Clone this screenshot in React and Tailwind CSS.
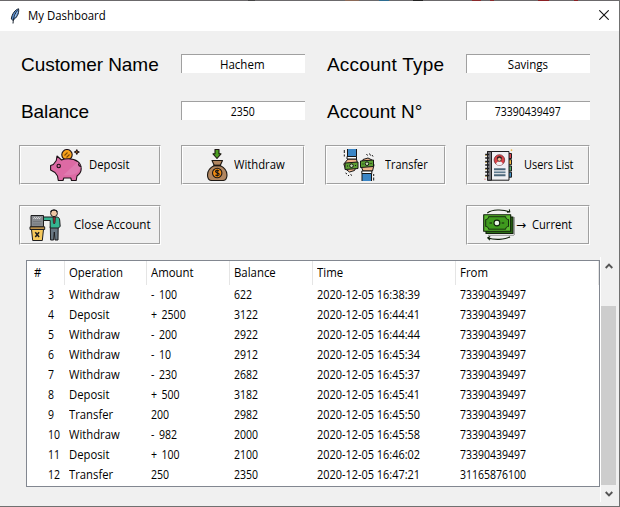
import React from "react";

const rows = [
  ["3", "Withdraw", "- 100", "622", "2020-12-05 16:38:39", "73390439497"],
  ["4", "Deposit", "+ 2500", "3122", "2020-12-05 16:44:41", "73390439497"],
  ["5", "Withdraw", "- 200", "2922", "2020-12-05 16:44:44", "73390439497"],
  ["6", "Withdraw", "- 10", "2912", "2020-12-05 16:45:34", "73390439497"],
  ["7", "Withdraw", "- 230", "2682", "2020-12-05 16:45:37", "73390439497"],
  ["8", "Deposit", "+ 500", "3182", "2020-12-05 16:45:41", "73390439497"],
  ["9", "Transfer", "200", "2982", "2020-12-05 16:45:50", "73390439497"],
  ["10", "Withdraw", "- 982", "2000", "2020-12-05 16:45:58", "73390439497"],
  ["11", "Deposit", "+ 100", "2100", "2020-12-05 16:46:02", "73390439497"],
  ["12", "Transfer", "250", "2350", "2020-12-05 16:47:21", "31165876100"],
];

const columns = "grid grid-cols-[38px_82px_83px_83px_143px_143px]";

function PiggyIcon() {
  return (
    <svg viewBox="0 0 32 32" className="size-8 shrink-0" stroke="#1c1016" strokeWidth="1.1" strokeLinejoin="round">
      <circle cx="17" cy="5.7" r="5.2" fill="#f7a11b" />
      <path d="M14.500 6.500l3-3M16.500 8.500l3-3" fill="none" stroke="#7b4a08" />
      <path d="M7 7l4.500 4c2-1 4-1.300 7-1.300 7.500 0 12.700 4 12.700 10 0 3-1.700 5.500-4.200 7.300l-.8 4.500h-4.700l-.7-2.500h-7l-.8 2.500H8.300l-.8-4.500-2.500-3.500L.6 21v-4.500l2.700-1 3-4z" fill="#dd6aa4" />
      <path d="M30.500 18c-1 7-9 9-17 8l14-13c2 1.500 3 3 3 5z" fill="#e07ab0" stroke="none" />
      <circle cx="8.700" cy="17" r="1.700" fill="#dd6aa4" />
      <path d="M28.500 14.500c0 2 1 3 2.700 3" fill="none" />
      <path d="M26.800 .8l.7 1.500 1.600.7-1.600.7-.7 1.500-.7-1.500-1.600-.7 1.600-.7z" fill="#f7a11b" />
    </svg>
  );
}

function MoneyBagIcon() {
  return (
    <svg viewBox="0 0 32 32" className="size-8 shrink-0" stroke="#1d1813" strokeWidth="1.100" strokeLinejoin="round">
      <path d="M14 .5h4v4.300h2L16 9.500l-4-4.700h2z" fill="#4a9e1f" />
      <path d="M11 11.500h10.500l-2.300 5c4 2 6.800 6 6.800 9.500 0 3.500-2 5.500-4.500 5.500H11c-2.600 0-4.500-2-4.500-5.500 0-3.500 2.800-7.500 6.800-9.500z" fill="#b18660" />
      <path d="M12.500 16.500h7.500" strokeWidth="1.700" />
      <circle cx="16.200" cy="24" r="4.700" fill="#f08a12" />
      <path d="M18 22c-1-1-3.500-.8-3.500.6 0 1.800 3.700.8 3.700 2.700 0 1.500-2.700 1.600-3.800.5M16.200 20.500v7" fill="none" />
    </svg>
  );
}

function Bill({ x, y }) {
  return (
    <g transform={`translate(${x} ${y})`}>
      <path d="M.5 1.500L13.500.5v6.500L.5 8z" fill="#5d9f33" />
      <circle cx="7" cy="4.200" r="1.800" fill="#c8dcba" />
      <path d="M2.500 4.500h1M10.500 4h1" />
    </g>
  );
}

function TransferIcon() {
  return (
    <svg viewBox="0 0 32 32" className="size-8 shrink-0" stroke="#161616" strokeWidth="1" strokeLinejoin="round">
      <path d="M4.500 -1h9v8.500h-9z" fill="#3b86c6" />
      <path d="M5 10h8.500l1 5-3 6.500-5 1.500-4-3-1.700-5z" fill="#f0b48c" />
      <path d="M4 7.500h9.500V10H4z" fill="#fff" />
      <Bill x={1.5} y={12.5} />
      <path d="M1.300 1v3M1.300 5.500v2" />
      <path d="M2.500 24l1.500 1M5 26l1 1M7.500 25.500l1.500 1" />
      <path d="M20 10.500l5-1.500 4 2 2 5-1.500 6H20l-2-5z" fill="#f0b48c" />
      <Bill x={17} y={10.5} />
      <path d="M18.800 22h10v2.500h-10z" fill="#fff" />
      <path d="M19 24.500h9.500V33H19z" fill="#3b86c6" />
      <path d="M30.700 25v2M30.700 28.500v3" />
      <path d="M23.500 5l1 1.500M26.500 4.500l1 2M29 6l1 1.500" />
    </svg>
  );
}

function UsersIcon() {
  return (
    <svg viewBox="0 0 32 32" className="size-8 shrink-0" stroke="#1d1d1f" strokeWidth="1" strokeLinejoin="round">
      <path d="M24 4.500h3.500v5H24z" fill="#d8434b" />
      <path d="M24 10.700h3.500v5H24z" fill="#f0b63e" />
      <path d="M24 17h3.500v5H24z" fill="#4fa863" />
      <path d="M24 23.200h3.500v5H24z" fill="#3f8fc4" />
      <path d="M3.500 2.500h21.500v28.700H3.500z" fill="#efeff3" />
      <path d="M3.500 2.500h4v28.700h-4z" fill="#77777d" />
      <path d="M1.200 5.500h4M1.200 9h4M1.200 12.500h4M1.200 16h4M1.200 19.500h4M1.200 23h4M1.200 26.500h4" strokeWidth="1.500" />
      <path d="M1 6.500h2M1 13.500h2M1 20.500h2M1 27.500h2" stroke="#b99a54" strokeWidth=".8" />
      <circle cx="15.400" cy="11" r="5.300" fill="#dd4248" stroke="#5c2024" strokeWidth=".7" />
      <path d="M12 15c.5-2 2-2.500 3.400-2.500s3 .5 3.400 2.500c-2 1.700-5 1.700-6.800 0z" fill="#efeff3" stroke="none" />
      <circle cx="15.400" cy="10.300" r="2" fill="#f2bd98" strokeWidth=".7" />
      <path d="M13.300 9.500c.3-2.300 3.900-2.300 4.200 0" fill="none" strokeWidth="1.200" />
      <path d="M10 20.300h11.500M10 26.300h11.500" stroke="#4b6579" strokeWidth="1.900" />
      <path d="M10 23.300h11.500" stroke="#5f7b90" strokeWidth="1.700" />
      <path d="M27.500 .3v1.800M26.600 1.200h1.800" stroke="#f0b63e" strokeWidth=".8" />
      <path d="M.5 30.200h1" stroke="#d8434b" />
    </svg>
  );
}

function CloseAccountIcon() {
  return (
    <svg viewBox="0 0 32 32" className="size-8 shrink-0" stroke="#1d1d1f" strokeWidth="1" strokeLinejoin="round">
      <path d="M2 6.500h12.500V18H2z" fill="#888b90" />
      <path d="M4.500 9.500l1-.8 1 .8 1-.8 1 .8 1-.8 1 .8 1-.8" fill="none" stroke="#f1f1f1" />
      <path d="M4 12.500h8.500M4 15h8.500" stroke="#707378" strokeWidth=".8" />
      <path d="M2.500 20.500h12l-1.200 11H3.700z" fill="#f6c95c" />
      <path d="M1 17.800h14.700v2.700H1z" fill="#bd9048" />
      <path d="M6.300 23.300l3.800 4.700M10.100 23.300L6.300 28" strokeWidth="1.500" />
      <path d="M21.300 17.500h7.900l-.2 13.500h-3l-.7-8-.7 8h-3z" fill="#697782" />
      <path d="M14.500 8h13c2 0 3 1 3.200 3l.5 6.500-2 1.500h-8v-7.500h-6.700z" fill="#35b591" />
      <path d="M24 8h2.500l-.5 6-.8 1-.8-1z" fill="#9b3037" strokeWidth=".7" />
      <circle cx="25" cy="4.300" r="3.400" fill="#efc7a4" />
      <path d="M21.700 3c.7-2.600 5.900-2.600 6.600 0" fill="none" strokeWidth="1.100" />
    </svg>
  );
}

function CashIcon() {
  return (
    <svg viewBox="0 0 32 32" className="size-8 shrink-0" stroke="#10200b" strokeWidth="1.100" strokeLinejoin="round">
      <path d="M3 8h27v16.500H3z" fill="#2c6b16" />
      <path d="M.7 5.700h27v16.500H.7z" fill="#58b82e" />
      <path d="M5.500 7.700h17.200c0 1.800 1 2.800 2.800 2.800v7c-1.800 0-2.800 1-2.800 2.700H5.500c0-1.700-1-2.700-2.800-2.700v-7c1.800 0 2.800-1 2.800-2.800z" fill="#3f9a1e" strokeWidth=".9" />
      <circle cx="13.900" cy="14" r="2.900" fill="#e9f4e4" />
      <path d="M6.500 14h2.500M18.700 14h2.500" />
      <path d="M4.300 4C9 .3 20 .3 26.300 2.800M26.300 .3l.5 2.700-2.800.3" fill="none" />
      <path d="M27 27.700c-5 3.300-16 3.300-22 1.300M7 31.200L4.700 28.800l2.500-1.300" fill="none" />
      <path d="M31.400 8.500v17.500" strokeDasharray="1 1" strokeWidth="1.200" stroke="#555" fill="none" />
      <path d="M5.500 26.300h26" strokeDasharray="1 1" strokeWidth="1.200" stroke="#666" fill="none" />
    </svg>
  );
}

function Label({ children, className = "" }) {
  return (
    <div className={`h-[19px] whitespace-nowrap pl-0.5 font-['Liberation_Sans',Arial,sans-serif] text-[19px] leading-[21px] ${className}`}>
      {children}
    </div>
  );
}

function Field({ children, numeric }) {
  return (
    <div
      className={`flex h-[19px] w-[124px] items-center justify-center border-l border-t border-[#a0a0a0] bg-white leading-[17px] ${
        numeric ? "pr-px" : "pr-[2px]"
      }`}
    >
      <span className={numeric ? "inline-block scale-x-[.875]" : "inline-block scale-x-[.96]"}>{children}</span>
    </div>
  );
}

function Button({ className, icon, children, textClass }) {
  return (
    <button className={`h-10 border border-b-white border-l-[#a0a0a0] border-r-white border-t-[#a0a0a0] text-left ${className}`}>
      <span className="flex h-full items-center border border-b-[#a0a0a0] border-l-white border-r-[#a0a0a0] border-t-white">
        <span className="flex w-full items-center">
          {icon}
          <span className={`origin-left whitespace-nowrap ${textClass}`}>{children}</span>
        </span>
      </span>
    </button>
  );
}

function Table() {
  const heads = ["#", "Operation", "Amount", "Balance", "Time", "From"];
  const cellScale = [
    "scale-x-[.875]",
    "scale-x-[.94]",
    "scale-x-[.88] [word-spacing:2px]",
    "scale-x-[.875]",
    "scale-x-[.91]",
    "scale-x-[.875]",
  ];
  return (
    <div className="h-[227px] w-[574px] border border-[#828790] bg-white">
      <div className={`${columns} h-6 leading-[23px]`}>
        {heads.map((h, i) => (
          <div key={h} className={`border-r border-[#e5e5e5] ${i === 0 ? "pl-[7px]" : "pl-[4px]"}`}>
            <span className="inline-block origin-left scale-x-[.95]">{h}</span>
          </div>
        ))}
      </div>
      {rows.map((r) => (
        <div key={r[0]} className={`${columns} h-5 leading-[19px]`}>
          {r.map((c, i) => (
            <div key={i} className={`whitespace-nowrap ${i === 0 ? "pl-[21px]" : "pl-[4px]"}`}>
              <span className={`inline-block origin-left ${cellScale[i]}`}>{c}</span>
            </div>
          ))}
        </div>
      ))}
    </div>
  );
}

function Scrollbar() {
  return (
    <div className="-mt-[3px] flex h-[245px] w-[17px] flex-col items-start border-l border-white">
      <svg viewBox="0 0 8 6" className="ml-[3.5px] mt-[6px] h-[6px] w-2 shrink-0" fill="none" stroke="#555" strokeWidth="1.900">
        <path d="M.7 5L4 1.700 7.300 5" />
      </svg>
      <div className="mt-[37px] h-[179px] w-[15px] shrink-0 bg-[#cdcdcd]" />
      <svg viewBox="0 0 8 6" className="ml-[3.5px] mt-[6px] h-[6px] w-2 shrink-0" fill="none" stroke="#555" strokeWidth="1.900">
        <path d="M.7 1L4 4.300 7.300 1" />
      </svg>
    </div>
  );
}

/* Sliver of the desktop showing above the window's title bar */
function TopEdge() {
  return (
    <div className="flex h-px shrink-0 bg-[#6b696b] pl-[248px]">
      <span className="w-[7px] bg-[#444]" />
      <span className="ml-[90px] w-[14px] bg-[#8c6a58]" />
      <span className="ml-[20px] w-[10px] bg-[#2d6c90]" />
      <span className="ml-[24px] w-[10px] bg-[#222]" />
      <span className="ml-[49px] w-[9px] bg-[#8a2a2c]" />
      <span className="ml-[9px] w-[4px] bg-[#8a2a2c]" />
      <span className="ml-[44px] w-[11px] bg-[#8a2024]" />
      <span className="ml-[25px] w-[4px] bg-[#8a2024]" />
    </div>
  );
}

export default function App() {
  return (
    <div className="flex h-[507px] w-[620px] flex-col overflow-hidden border-b border-r border-[#707070] bg-[#f0f0f0] font-['Open_Sans','Noto_Sans',sans-serif] text-[12px] text-black">
      <TopEdge />
      <header className="flex h-[30px] shrink-0 items-center bg-white pl-[9px] pr-[10px]">
        <svg viewBox="0 0 12 16" className="-mt-px h-4 w-3" strokeLinejoin="round">
          <path d="M9.600 .8C6.500 1.500 3 5.500 2.300 11l1.500 1.200C7.500 10 10.300 6 9.600 .8z" fill="#5b8fd0" stroke="#16202c" strokeWidth="1" />
          <path d="M8.500 2.500C6 5.500 4.500 9 4 15.500" fill="none" stroke="#16202c" strokeWidth="1" />
          <path d="M8.700 3.500C7.500 5 6.500 7 6 9" fill="none" stroke="#bcd6f3" strokeWidth=".8" />
        </svg>
        <span className="ml-[7px] inline-block origin-left scale-x-[.95]">My Dashboard</span>
        <svg viewBox="0 0 10 10" className="-mt-[2px] ml-auto size-[10px]" fill="none" stroke="#111" strokeWidth="1.100">
          <path d="M.3.300l9.400 9.400M9.700.3l-9.400 9.400" />
        </svg>
      </header>

      <main className="pl-[19px] pt-[23px]">
        <div className="grid grid-cols-[162px_144px_141px_124px] grid-rows-[47px_44px_60px_55px]">
          <Label className="tracking-[-0.05px]">Customer Name</Label>
          <Field>Hachem</Field>
          <Label className="tracking-[0.2px]">Account Type</Label>
          <Field>Savings</Field>

          <Label className="tracking-[-0.1px]">Balance</Label>
          <Field numeric>2350</Field>
          <Label>Account N°</Label>
          <Field numeric>73390439497</Field>

          <Button className="w-[142px]" icon={<span className="pl-[29px]"><PiggyIcon /></span>} textClass="ml-[7px] scale-x-[.94]">
            Deposit
          </Button>
          <Button className="w-[124px]" icon={<span className="pl-[18px]"><MoneyBagIcon /></span>} textClass="ml-[1px] scale-x-[.94]">
            Withdraw
          </Button>
          <Button className="w-[121px]" icon={<span className="pl-[16px]"><TransferIcon /></span>} textClass="ml-[10px] scale-x-[.91]">
            Transfer
          </Button>
          <Button className="w-[124px]" icon={<span className="pl-[16px]"><UsersIcon /></span>} textClass="ml-[8px] scale-x-[.91]">
            Users List
          </Button>

          <Button className="w-[142px]" icon={<span className="pl-[8px]"><CloseAccountIcon /></span>} textClass="ml-[13px] scale-x-[.975]">
            Close Account
          </Button>
          <div className="col-start-4">
            <Button
              className="w-[124px]"
              icon={
                <span className="flex items-center pl-[15px]">
                  <CashIcon />
                  <span className="ml-[1px] w-[10px] font-['DejaVu_Sans',sans-serif] text-[12px]">→</span>
                </span>
              }
              textClass="ml-[6px] scale-x-[.93]"
            >
              Current
            </Button>
          </div>
        </div>

        <div className="flex items-start pl-[7px]">
          <Table />
          <Scrollbar />
        </div>
      </main>
    </div>
  );
}
